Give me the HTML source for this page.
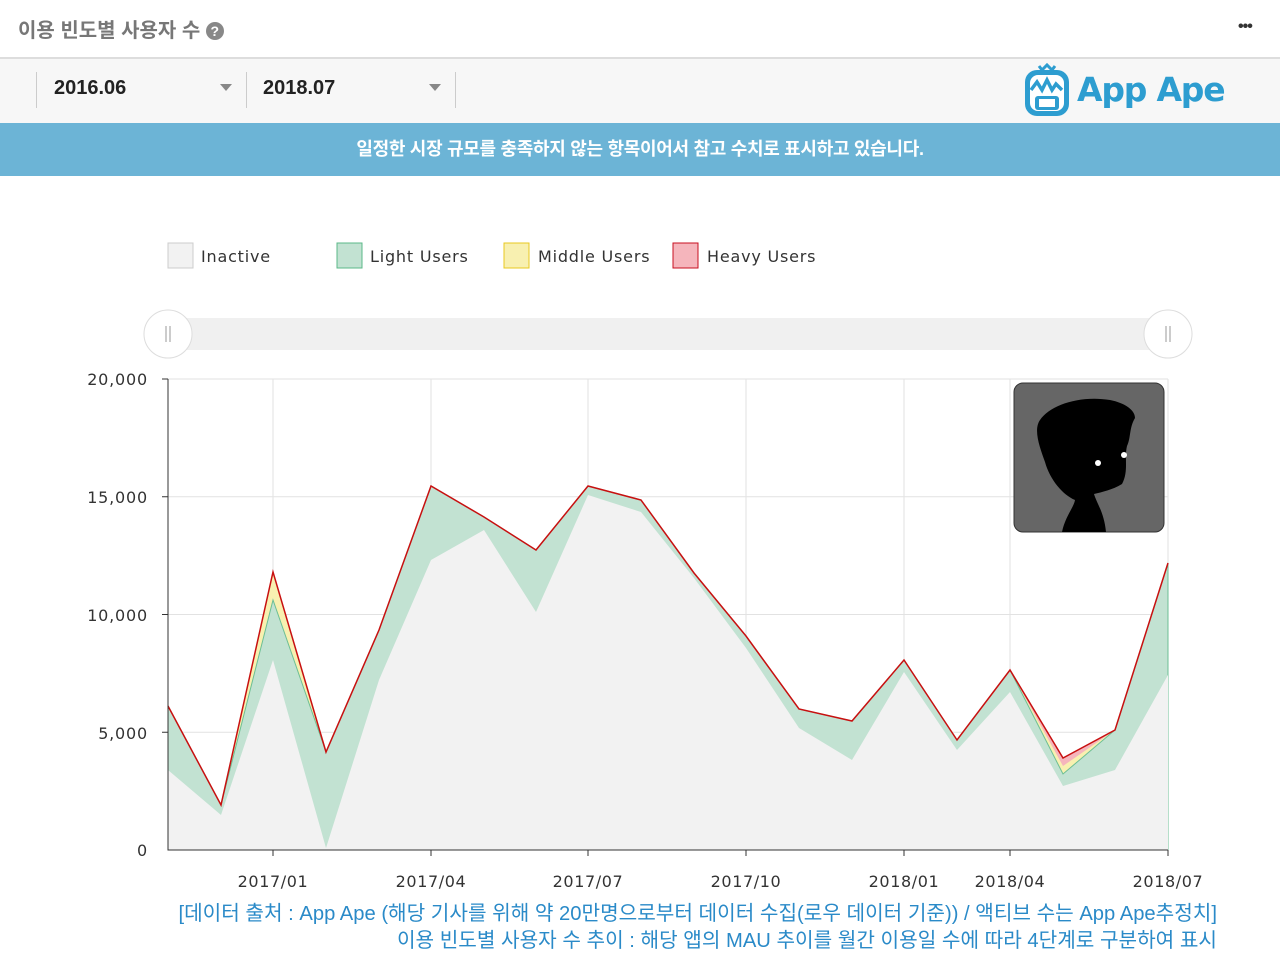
<!DOCTYPE html><html><head><meta charset="utf-8"><style>
body{margin:0;width:1280px;height:970px;background:#fff;font-family:"Liberation Sans","Noto Sans CJK KR",sans-serif;position:relative;overflow:hidden}
.a{position:absolute}
</style></head><body>
<div class="a" style="left:18px;top:14px;font-size:20px;color:#777;font-weight:bold">이용 빈도별 사용자 수 <span style="display:inline-block;width:18px;height:18px;border-radius:50%;background:#888;color:#fff;font-size:14px;line-height:18px;text-align:center;font-weight:bold;vertical-align:1px">?</span></div>
<div class="a" style="left:1238px;top:18px;font-size:16px;font-weight:bold;color:#333;letter-spacing:-1px">•••</div>
<div class="a" style="left:0;top:57px;width:1280px;height:65px;background:#f7f7f7;border-top:2px solid #ddd;border-bottom:1px solid #ddd"></div>
<div class="a" style="left:36px;top:72px;width:1px;height:36px;background:#ccc"></div>
<div class="a" style="left:246px;top:72px;width:1px;height:36px;background:#ccc"></div>
<div class="a" style="left:455px;top:72px;width:1px;height:36px;background:#ccc"></div>
<div class="a" style="left:54px;top:77px;font-size:20px;color:#222;font-weight:bold">2016.06</div>
<div class="a" style="left:263px;top:77px;font-size:20px;color:#222;font-weight:bold">2018.07</div>
<div class="a" style="left:220px;top:84px;border:6px solid transparent;border-top:7px solid #888"></div>
<div class="a" style="left:429px;top:84px;border:6px solid transparent;border-top:7px solid #888"></div>
<svg class="a" style="left:1022px;top:62px" width="50" height="56" viewBox="0 0 50 56"><rect x="3" y="8" width="44" height="46" rx="12" fill="#2d9dd0"/><rect x="8" y="13" width="34" height="36" rx="8" fill="#fff"/><path d="M17 4l3 4 5-5 5 5 3-4" stroke="#2d9dd0" stroke-width="3" fill="none"/><path d="M9 28l6-8 5 8 5-10 5 10 4-6 6 6" stroke="#2d9dd0" stroke-width="3.5" fill="none"/><rect x="13" y="34" width="24" height="14" rx="3" fill="#2d9dd0"/><rect x="17" y="37" width="16" height="8" fill="#fff"/></svg>
<div class="a" style="left:1077px;top:70px;font-size:33px;font-weight:bold;color:#2d9dd0;letter-spacing:-1.2px;font-family:'DejaVu Sans',sans-serif">App Ape</div>
<div class="a" style="left:0;top:123px;width:1280px;height:53px;background:#6cb4d6;color:#fff;font-size:18px;text-align:center;line-height:52px;font-weight:bold;letter-spacing:-0.3px">일정한 시장 규모를 충족하지 않는 항목이어서 참고 수치로 표시하고 있습니다.</div>
<svg class="a" style="left:0;top:0" width="1280" height="970">
<g font-family="DejaVu Sans,sans-serif" font-size="16" fill="#333" letter-spacing="0.8">
<rect x="168" y="243" width="25" height="25" fill="#f2f2f2" stroke="#ccc"/><text x="201" y="262">Inactive</text>
<rect x="337" y="243" width="25" height="25" fill="#c2e2d2" stroke="#5bb888"/><text x="370" y="262">Light Users</text>
<rect x="504" y="243" width="25" height="25" fill="#f8f0b0" stroke="#e8c820"/><text x="538" y="262">Middle Users</text>
<rect x="673" y="243" width="25" height="25" fill="#f5b5bc" stroke="#c81020"/><text x="707" y="262">Heavy Users</text>
</g>
<rect x="168" y="318" width="1000" height="32" fill="#f0f0f0"/>
<circle cx="168" cy="334" r="24" fill="#fff" stroke="#ddd"/><circle cx="1168" cy="334" r="24" fill="#fff" stroke="#ddd"/>
<path d="M166 326v16M170 326v16M1166 326v16M1170 326v16" stroke="#999"/>
<g stroke="#e2e2e2"><path d="M168 379H1168M168 496.75H1168M168 614.5H1168M168 732.25H1168M273 379V850M431 379V850M588 379V850M746 379V850M904 379V850M1010 379V850M1168 379V850"/></g>
<polygon fill="#f5b5bc" points="168,850 168,706 221,805 273,572 326,752 379,630 431,486 484,517 536,550 588,486 641,500 694,573 746,636 799,709 852,721 904,660 957,740 1010,670 1063,758 1115,730 1168,563 1168,850"/>
<polygon fill="#f8f0b0" points="168,850 168,706 221,805 273,572 326,752 379,630 431,486 484,517 536,550 588,486 641,500 694,573 746,636 799,709 852,721 904,660 957,740 1010,670 1063,766 1115,730 1168,563 1168,850"/>
<polygon fill="#c2e2d2" stroke="#6cbf94" points="168,850 168,706 221,805 273,600 326,752 379,630 431,486 484,517 536,550 588,486 641,500 694,573 746,636 799,709 852,721 904,660 957,740 1010,670 1063,774 1115,730 1168,563 1168,850"/>
<polygon fill="#f2f2f2" points="168,850 168,770 221,815 273,660 326,848 379,680 431,560 484,530 536,612 588,495 641,512 694,578 746,648 799,728 852,760 904,672 957,750 1010,692 1063,786 1115,770 1168,675 1168,850"/>
<polyline fill="none" stroke="#c81010" stroke-width="1.5" points="168,706 221,805 273,572 326,752 379,630 431,486 484,517 536,550 588,486 641,500 694,573 746,636 799,709 852,721 904,660 957,740 1010,670 1063,758 1115,730 1168,563"/>
<path d="M168 379V850H1168M162 379h6M162 496.75h6M162 614.5h6M162 732.25h6M273 850v6M431 850v6M588 850v6M746 850v6M904 850v6M1010 850v6M1168 850v6" stroke="#333" fill="none"/>
<g font-family="DejaVu Sans,sans-serif" font-size="16" fill="#333" text-anchor="end" letter-spacing="0.8">
<text x="148" y="385">20,000</text><text x="148" y="503">15,000</text><text x="148" y="621">10,000</text><text x="148" y="739">5,000</text><text x="148" y="856">0</text></g>
<g font-family="DejaVu Sans,sans-serif" font-size="16" fill="#333" text-anchor="middle" letter-spacing="0.6">
<text x="273" y="887">2017/01</text><text x="431" y="887">2017/04</text><text x="588" y="887">2017/07</text><text x="746" y="887">2017/10</text><text x="904" y="887">2018/01</text><text x="1010" y="887">2018/04</text><text x="1168" y="887">2018/07</text></g>
<rect x="1014" y="383" width="150" height="149" rx="9" fill="#666" stroke="#333"/>
<path d="M1040 420c10-15 40-25 70-20 15 3 25 10 25 18-6 10-4 20-8 28-3 12 2 25-5 38-10 6-20 8-28 10 3 10 10 18 12 38h-44c3-15 12-25 13-32-12-5-25-20-30-38-5-14-12-32-5-42z" fill="#000"/>
<circle cx="1098" cy="463" r="3" fill="#fff"/><circle cx="1124" cy="455" r="3" fill="#fff"/>
</svg>
<div class="a" style="right:63px;top:901px;font-size:20.2px;color:#2a8ac8;text-align:right;line-height:27px;white-space:nowrap">[데이터 출처 : App Ape (해당 기사를 위해 약 20만명으로부터 데이터 수집(로우 데이터 기준)) / 액티브 수는 App Ape추정치]<br>이용 빈도별 사용자 수 추이 : 해당 앱의 MAU 추이를 월간 이용일 수에 따라 4단계로 구분하여 표시</div>
</body></html>
